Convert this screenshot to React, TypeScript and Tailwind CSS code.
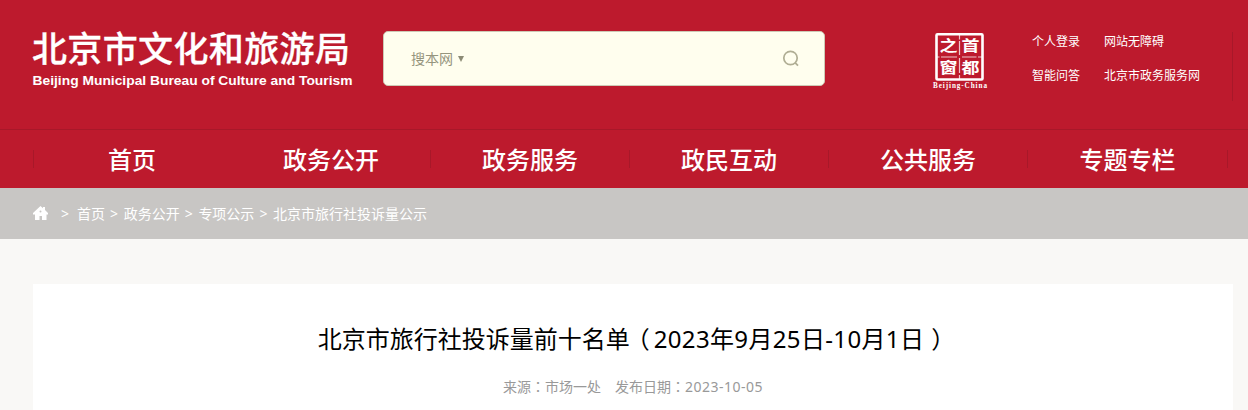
import { Fragment } from "react";

const NAV = ["首页", "政务公开", "政务服务", "政民互动", "公共服务", "专题专栏"];

const LINKS = ["个人登录", "网站无障碍", "智能问答", "北京市政务服务网"];

const CRUMBS = ["首页", "政务公开", "专项公示", "北京市旅行社投诉量公示"];

function SiteLogo() {
  return (
    <svg width="322" height="62" viewBox="0 0 322 62" className="mt-7 overflow-visible" fill="#fff">
      <text
        x="-1"
        y="33.5"
        fontSize="35"
        fontWeight="500"
        textLength="318"
        stroke="#fff"
        strokeWidth="0.3"
        className="font-['Noto_Sans_CJK_SC',sans-serif]"
      >
        北京市文化和旅游局
      </text>
      <text
        x="-0.5"
        y="57"
        fontSize="13.5"
        fontWeight="700"
        textLength="320"
        lengthAdjust="spacingAndGlyphs"
        className="font-['Liberation_Sans',sans-serif]"
      >
        Beijing Municipal Bureau of Culture and Tourism
      </text>
    </svg>
  );
}

function CapitalSeal() {
  return (
    <svg width="56" height="58" viewBox="0 0 56 58" className="mt-8" fill="#fff">
      <rect x="4.500" y="2.250" width="46" height="45.250" rx="1" fill="none" stroke="#fff" strokeWidth="2.6" />
      <path
        d="M27.500 3v4.500M27.500 9v14M27.500 26v15M27.500 43v4M5 25h2.500M9 25h16M30 25h14.500M46 25h4"
        stroke="#fff"
        strokeOpacity="0.75"
        strokeWidth="1.2"
      />
      <g fontSize="18" fontWeight="700" className="font-['Noto_Sans_CJK_SC',sans-serif]">
        <text x="7.500" y="19" transform="translate(0 3) scale(1 .84)">之</text>
        <text x="29.500" y="19" transform="translate(0 3) scale(1 .84)">首</text>
        <text x="7.500" y="42" transform="translate(0 6) scale(1 .84)">窗</text>
        <text x="29.500" y="42" transform="translate(0 6) scale(1 .84)">都</text>
      </g>
      <text
        x="1"
        y="56"
        fontSize="7.2"
        fontWeight="700"
        textLength="54"
        className="font-['Liberation_Serif',serif]"
      >
        Beijing-China
      </text>
    </svg>
  );
}

function SearchBox() {
  return (
    <div className="ml-7 mt-[31px] flex h-[55px] w-[442px] items-center rounded-[5px] border border-[#cdc9b5] bg-[#fffeee] pl-[27px] pr-[25px] text-sm text-[#96957e]">
      <span>搜本网</span>
      <svg width="6" height="6" viewBox="0 0 6 6" className="ml-[5px]" fill="#8c8b75">
        <path d="M0 0h6L3 6z" />
      </svg>
      <svg width="17" height="17" viewBox="0 0 17 17" className="ml-auto" fill="none" stroke="#b0ae94" strokeWidth="1.7">
        <circle cx="8.500" cy="8" r="6.700" />
        <path d="M13 12.700l3 3" />
      </svg>
    </div>
  );
}

function Header() {
  return (
    <header className="h-[188px] bg-[#bd1a2d] text-white">
      <div className="flex h-[130px] border-b border-[#a81829] pl-[33px] pr-[15px]">
        <SiteLogo />
        <SearchBox />
        <div className="ml-[107px]">
          <CapitalSeal />
        </div>
        <div className="ml-auto mt-8 h-[69px] w-[201px] border-r border-[#a81829]">
          <div className="-mt-[7px] grid grid-cols-[72px_auto] text-xs leading-[34px]">
            {LINKS.map((l) => (
              <a key={l} className="whitespace-nowrap">
                {l}
              </a>
            ))}
          </div>
        </div>
      </div>
      <nav className="ml-[33px] flex h-[58px] items-center">
        <span className="h-[18px] w-px bg-[#a81829]" />
        {NAV.map((n, i) => (
          <a
            key={n}
            className={
              "flex h-[18px] items-center justify-center border-[#a81829] pt-px text-2xl font-medium " +
              (i === 0 ? "w-[198px] pr-0.5" : i === 5 ? "w-[200px] border-r" : "w-[199px] border-r")
            }
          >
            {n}
          </a>
        ))}
      </nav>
    </header>
  );
}

function Breadcrumb() {
  return (
    <div className="flex h-[51px] items-center bg-[#c8c6c4] pl-[33px] text-sm text-white">
      <svg width="15" height="14" viewBox="0 0 15 14" className="-mt-0.5 mr-[13px]" fill="#fff">
        <path d="M7.500 0L10 2.200V1h2v3l3 3v1.500h-1.500V14H9V10H6.500v4H2V8.500H0V7z" />
        <circle cx="7.500" cy="5.500" r="1" fill="#c8c6c4" />
      </svg>
      {CRUMBS.map((c, i) => (
        <Fragment key={c}>
          <span className={i === 0 ? "w-4" : "w-[18.7px] pl-[5px]"}>&gt;</span>
          <a>{c}</a>
        </Fragment>
      ))}
    </div>
  );
}

// TC glyphs keep the full-width colon centred in its box
function Colon() {
  return (
    <span lang="zh-TW" className="font-['Noto_Sans_CJK_TC',sans-serif]">
      ：
    </span>
  );
}

export default function App() {
  return (
    <div lang="zh-CN" className="h-[410px] overflow-hidden bg-[#f9f8f6] font-['Noto_Sans','Noto_Sans_CJK_SC',sans-serif]">
      <Header />
      <Breadcrumb />
      <main className="ml-[33px] mt-[45px] h-[126px] w-[1200px] bg-white pt-[37px] text-center">
        <h1 className="text-2xl leading-[36px] text-black">
          北京市旅行社投诉量前十名单
          <span className="-ml-1 mr-1">（</span>
          <span className="tracking-[0.35px]">2023年9月25日-10月1日</span>
          <span className="-mr-[7px] ml-[7px]">）</span>
        </h1>
        <p className="mt-[19px] text-sm text-[#999]">
          来源
          <Colon />
          市场一处
          <span className="ml-[14px]">发布日期</span>
          <Colon />
          <span className="tracking-[0.5px]">2023-10-05</span>
        </p>
      </main>
    </div>
  );
}
